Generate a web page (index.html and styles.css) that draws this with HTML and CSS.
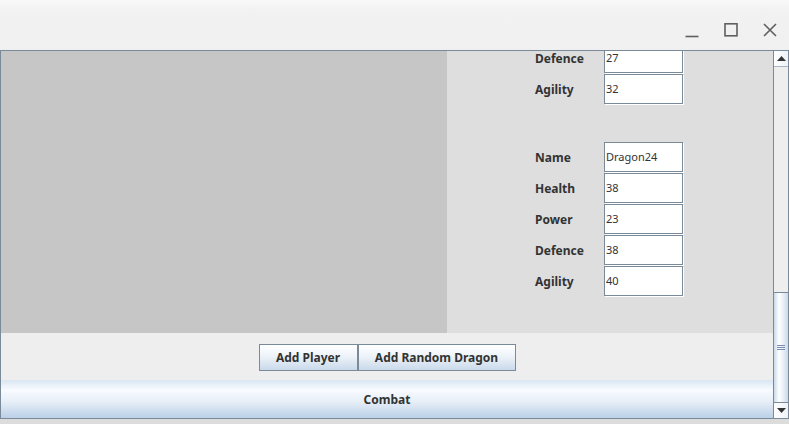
FILE: index.html
```html
<!DOCTYPE html>
<html>
<head>
<meta charset="utf-8">
<link rel="stylesheet" href="styles.css">
</head>
<body>
<div class="window">
  <div class="titlebar">
    <div class="controls">
      <svg class="ctl" width="16" height="16" viewBox="0 0 16 16"><path d="M1.5 14.5h13" stroke="#5f5f5f" stroke-width="1.6" fill="none"/></svg>
      <svg class="ctl" width="16" height="16" viewBox="0 0 16 16"><rect x="2" y="1.8" width="12" height="12" stroke="#5f5f5f" stroke-width="1.6" fill="none"/></svg>
      <svg class="ctl" width="16" height="16" viewBox="0 0 16 16"><path d="M2 2L14 14M14 2L2 14" stroke="#5f5f5f" stroke-width="1.6" fill="none"/></svg>
    </div>
  </div>
  <div class="frame">
    <div class="viewport">
      <div class="top">
        <div class="canvas"></div>
        <div class="side">
          <div class="form">
            <div class="group">
              <div class="row"><span class="lbl">Defence</span><span class="field">27</span></div>
              <div class="row"><span class="lbl">Agility</span><span class="field">32</span></div>
            </div>
            <div class="group">
              <div class="row"><span class="lbl">Name</span><span class="field">Dragon24</span></div>
              <div class="row"><span class="lbl">Health</span><span class="field">38</span></div>
              <div class="row"><span class="lbl">Power</span><span class="field">23</span></div>
              <div class="row"><span class="lbl">Defence</span><span class="field">38</span></div>
              <div class="row"><span class="lbl">Agility</span><span class="field">40</span></div>
            </div>
          </div>
        </div>
      </div>
      <div class="buttons">
        <button class="btn">Add Player</button><button class="btn">Add Random Dragon</button>
      </div>
      <div class="combat">Combat</div>
    </div>
    <div class="scrollbar">
      <div class="arrow"><svg width="9" height="5" viewBox="0 0 9 5"><path d="M0 5L4.5 0L9 5Z" fill="#333"/></svg></div>
      <div class="track"></div>
      <div class="thumb"><span class="grip"></span></div>
      <div class="arrow"><svg width="9" height="5" viewBox="0 0 9 5"><path d="M0 0L4.5 5L9 0Z" fill="#333"/></svg></div>
    </div>
  </div>
  <div class="shadow"></div>
</div>
</body>
</html>
```
FILE: styles.css
```css
* { box-sizing: border-box; }
html, body { margin: 0; padding: 0; }
body {
  width: 789px;
  height: 424px;
  overflow: hidden;
  background: #f0f0f0;
  font-family: "Noto Sans", "DejaVu Sans", sans-serif;
}
.window { width: 789px; height: 424px; display: flex; flex-direction: column; }
.titlebar {
  height: 50px;
  background: linear-gradient(to bottom, #f9f9f9 0px, #f2f2f2 10px, #f0f0f0 50px);
  display: flex;
  justify-content: flex-end;
  align-items: flex-start;
}
.controls { display: flex; gap: 23px; margin-top: 22px; margin-right: 11px; }
.ctl { display: block; }
.frame {
  display: flex;
  height: 369px;
  border-top: 1px solid #7a8a99;
  border-left: 1px solid #7a8a99;
  border-bottom: 1px solid #7a8a99;
}
.viewport { width: 772px; display: flex; flex-direction: column; overflow: hidden; }
.top { height: 283px; display: flex; }
.canvas { width: 446px; background: #c6c6c6; }
.side { flex: 1; background: #dedede; overflow: hidden; padding-left: 88px; }
.form { margin-top: -8px; display: flex; flex-direction: column; gap: 38px; }
.group { display: flex; flex-direction: column; gap: 1px; }
.row { display: flex; align-items: center; height: 30px; }
.lbl {
  width: 69px;
  font-size: 12px;
  font-weight: bold;
  color: #333;
}
.field {
  width: 79px;
  height: 30px;
  background: #fff;
  border: 1px solid #7a8a99;
  box-shadow: 1px 1px 0 #fff;
  padding-left: 1px;
  font-size: 11px;
  color: #333;
  line-height: 28px;
}
.buttons {
  height: 47px;
  background: #eeeeee;
  display: flex;
  justify-content: center;
  align-items: flex-start;
  padding-top: 11px;
}
.btn {
  height: 27px;
  margin: 0;
  border: 1px solid #7a8a99;
  background: linear-gradient(to bottom, #ffffff 0%, #eef3f9 45%, #c9d9ea 100%);
  font-family: "Noto Sans", "DejaVu Sans", sans-serif;
  font-size: 12px;
  font-weight: bold;
  color: #333;
  padding: 0 10px;
}
.btn:first-child { width: 99px; }
.btn:last-child { width: 158px; }
.combat {
  height: 38px;
  background: linear-gradient(to bottom, #dae6f2 0px, #f8fbff 10px, #e6eef7 22px, #bdd2e8 37px);
  font-size: 12px;
  font-weight: bold;
  color: #333;
  display: flex;
  align-items: center;
  justify-content: center;
}
.scrollbar {
  width: 16px;
  border-left: 1px solid #7a8a99;
  border-right: 1px solid #7a8a99;
  display: flex;
  flex-direction: column;
  background: #eeeeee;
}
.arrow {
  height: 16px;
  display: flex;
  align-items: center;
  justify-content: center;
  background: linear-gradient(to right, #ffffff, #eef2f6);
}
.arrow:first-child { border-bottom: 1px solid #a8b6c4; }
.arrow:last-child { border-top: 1px solid #7a8a99; }
.track { height: 225px; }
.thumb {
  flex: 1;
  border-top: 1px solid #7a8a99;
  background: linear-gradient(to right, #c9d9ea 0%, #ffffff 35%, #eef3f9 60%, #c9d9ea 100%);
  display: flex;
  align-items: center;
  justify-content: center;
}
.grip {
  width: 8px;
  height: 5px;
  border-top: 1px solid #7a8ab0;
  border-bottom: 1px solid #7a8ab0;
  position: relative;
}
.grip::after {
  content: "";
  position: absolute;
  left: 0; right: 0; top: 1px;
  border-top: 1px solid #7a8ab0;
}
.shadow { flex: 1; background: #dcdcdc; }
```
